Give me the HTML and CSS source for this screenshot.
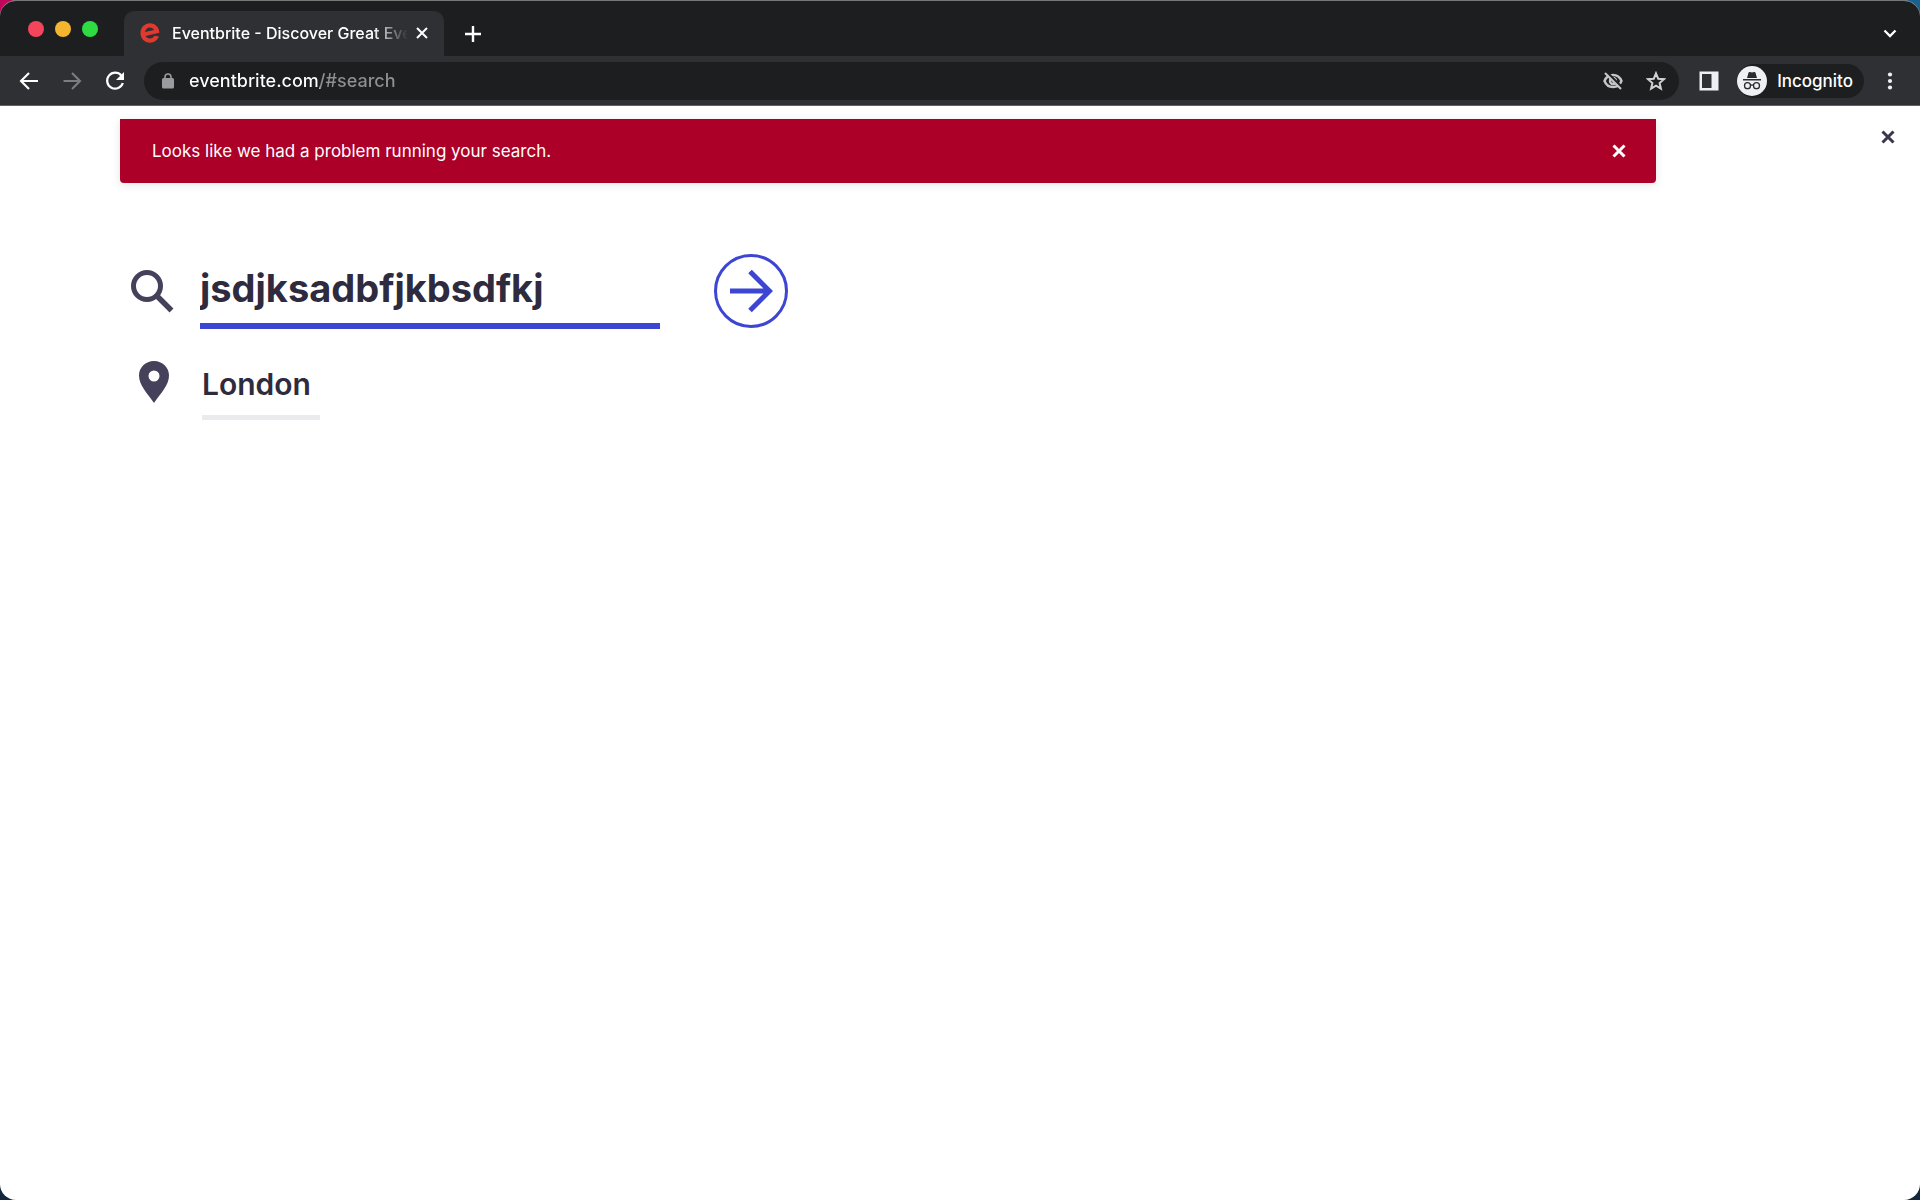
FILE: index.html
```html
<!DOCTYPE html>
<html lang="en">
<head>
    <meta charset="UTF-8">
    <meta name="viewport" content="width=device-width, initial-scale=1.0">
    <title>Eventbrite - Discover Great Events</title>
    <link rel="stylesheet" href="styles.css">
</head>
<body>
    <div class="window">
        <!-- Tab strip -->
        <header class="tab-strip">
            <div class="traffic-lights">
                <button class="light red" aria-label="Close window"></button>
                <button class="light yellow" aria-label="Minimize window"></button>
                <button class="light green" aria-label="Zoom window"></button>
            </div>
            <div class="tab">
                <svg class="favicon" width="20" height="20" viewBox="0 0 20 20">
                    <path d="M10 .3C4.600.3.500 4.500.500 10.100C.5 15.700 4.600 19.700 10 19.700C14 19.700 17.500 17.300 19 13.600L14.500 12.700C13.300 14.500 11.900 15.400 10 15.400C7.900 15.400 6.300 14.500 5.500 12.900L19.400 9.700C19.200 4.200 15.200.3 10 .3zM5 9.100C5.500 6.400 7.300 4.600 9.900 4.600C11.800 4.600 13.300 5.500 14.100 7.100z" fill="#e0392f" fill-rule="evenodd"/>
                </svg>
                <span class="tab-title">Eventbrite - Discover Great Eve</span>
                <button class="icon-button tab-close" aria-label="Close tab">
                    <svg width="12" height="12" viewBox="0 0 12 12"><path d="M1 1l10 10M11 1L1 11" fill="none" stroke="#fff" stroke-width="2"/></svg>
                </button>
            </div>
            <button class="icon-button new-tab" aria-label="New tab">
                <svg width="16" height="16" viewBox="0 0 16 16"><path d="M8 0v16M0 8h16" fill="none" stroke="#fff" stroke-width="2.4"/></svg>
            </button>
            <button class="icon-button tab-search" aria-label="Search tabs">
                <svg width="14" height="10" viewBox="0 0 14 10"><path d="M1.500 1.500l5.500 5.500l5.500-5.500" fill="none" stroke="#fff" stroke-width="2.300"/></svg>
            </button>
        </header>

        <!-- Toolbar -->
        <div class="toolbar">
            <nav class="history">
                <button class="icon-button" aria-label="Back">
                    <svg width="20" height="20" viewBox="0 0 20 20"><path d="M19 10H2.500M10 2L2 10l8 8" fill="none" stroke="#fff" stroke-width="2.100"/></svg>
                </button>
                <button class="icon-button" aria-label="Forward">
                    <svg width="20" height="20" viewBox="0 0 20 20"><path d="M1.500 10H17.500M10 2l8 8l-8 8" fill="none" stroke="#7c7d80" stroke-width="2.100"/></svg>
                </button>
                <button class="icon-button" aria-label="Reload">
                    <svg width="20" height="20" viewBox="0 0 20 20"><path d="M16.300 4.500A8 8 0 1 0 17.800 12" fill="none" stroke="#fff" stroke-width="2.200"/><path d="M19 1v8h-8z" fill="#fff"/></svg>
                </button>
            </nav>
            <div class="address-bar">
                <svg width="12" height="16" viewBox="0 0 12 16"><rect x="0" y="5" width="12" height="10.500" rx="1.500" fill="#9a9b9e"/><path d="M3 6V4a3 3 0 0 1 6 0v2" fill="none" stroke="#9a9b9e" stroke-width="1.600"/></svg>
                <input class="url" type="text" value="eventbrite.com/#search" aria-label="Address">
                <button class="icon-button" aria-label="Third-party cookies blocked">
                    <svg width="20" height="20" viewBox="0 0 20 20">
                        <path d="M1.500 10C3 6.200 6.200 4 10 4s7 2.200 8.500 6C17 13.800 13.800 16 10 16S3 13.800 1.500 10z" fill="none" stroke="#c4c5c8" stroke-width="2.400"/>
                        <circle cx="10" cy="10" r="3" fill="none" stroke="#c4c5c8" stroke-width="2.400"/>
                        <path d="M3.500 1L19 16.500" stroke="#1d1e20" stroke-width="2.500"/>
                        <path d="M2 2l16 16" stroke="#c4c5c8" stroke-width="2.200"/>
                    </svg>
                </button>
                <button class="icon-button" aria-label="Bookmark this tab">
                    <svg width="20" height="20" viewBox="0 0 20 20"><path d="M10 2.300l2.200 5.400l5.800.5l-4.400 3.800l1.300 5.700l-4.900-3l-4.900 3l1.300-5.700L2 8.200l5.800-.5z" fill="none" stroke="#d0d1d4" stroke-width="2"/></svg>
                </button>
            </div>
            <button class="icon-button side-panel" aria-label="Side panel">
                <svg width="20" height="20" viewBox="0 0 20 20"><path d="M.5.5h19v19H.5zM3 3v14h9.500V3z" fill="#eeeff2" fill-rule="evenodd"/></svg>
            </button>
            <button class="incognito">
                <svg width="30" height="30" viewBox="0 0 30 30">
                    <circle cx="15" cy="15" r="15" fill="#eff0f3"/>
                    <path d="M10 12l1.500-5.200q.4-1.100 1.500-.7l2 .5l2-.5q1.100-.4 1.500.7L20 12z" fill="#2a2b2e"/>
                    <path d="M6 13.800h18" stroke="#2a2b2e" stroke-width="1.500"/>
                    <circle cx="10.500" cy="19.700" r="3" fill="none" stroke="#2a2b2e" stroke-width="1.300"/>
                    <circle cx="19.500" cy="19.700" r="3" fill="none" stroke="#2a2b2e" stroke-width="1.300"/>
                    <path d="M13.500 19.500q1.500-1.200 3 0" fill="none" stroke="#2a2b2e" stroke-width="1.300"/>
                </svg>
                Incognito
            </button>
            <button class="icon-button menu" aria-label="Menu">
                <svg width="6" height="18" viewBox="0 0 6 18" fill="#f0f0f2"><circle cx="3" cy="2.500" r="2.100"/><circle cx="3" cy="9" r="2.100"/><circle cx="3" cy="15.500" r="2.100"/></svg>
            </button>
        </div>

        <!-- Page content -->
        <main class="page">
            <div class="notification" role="alert">
                <p>Looks like we had a problem running your search.</p>
                <button class="icon-button" aria-label="Dismiss">
                    <svg width="14" height="14" viewBox="0 0 14 14"><path d="M1.500 1.500l11 11M12.500 1.500l-11 11" stroke="#fff" stroke-width="3"/></svg>
                </button>
            </div>
            <button class="icon-button close-search" aria-label="Close search">
                <svg width="14" height="14" viewBox="0 0 14 14"><path d="M1.500 1.500l11 11M12.500 1.500l-11 11" stroke="#39364f" stroke-width="3"/></svg>
            </button>

            <form class="search-form">
                <div class="search-row">
                    <label class="field-icon" for="query" aria-label="Search events">
                        <svg width="44" height="44" viewBox="0 0 44 44"><circle cx="17" cy="17" r="13.500" fill="none" stroke="#45415a" stroke-width="5"/><path d="M26 26l15.500 15.500" stroke="#45415a" stroke-width="5.500"/></svg>
                    </label>
                    <input class="query" id="query" type="text" value="jsdjksadbfjkbsdfkj" spellcheck="false">
                    <button class="submit" aria-label="Search">
                        <svg width="44" height="44" viewBox="0 0 44 44"><path d="M1 22h38M21 2.500L40.500 22L21 41.500" fill="none" stroke="#3d45d3" stroke-width="5"/></svg>
                    </button>
                </div>
                <div class="search-row location-row">
                    <label class="field-icon" for="location" aria-label="Location">
                        <svg width="32" height="44" viewBox="0 0 32 44"><path d="M16 1C7.500 1 1 7.500 1 15.500C1 25 9 33 16 43C23 33 31 25 31 15.500C31 7.500 24.500 1 16 1zM16 10.500a5.500 5.500 0 1 1 0 11a5.500 5.500 0 1 1 0-11z" fill="#45415a" fill-rule="evenodd"/></svg>
                    </label>
                    <input class="location" id="location" type="text" value="London">
                </div>
            </form>
        </main>
    </div>
</body>
</html>
```
FILE: styles.css
```css
* {
    box-sizing: border-box;
}
body {
    margin: 0;
    font-family: Inter, sans-serif;
    background: linear-gradient(to bottom, transparent 50%, #12263c 50%), linear-gradient(to right, #c0085a, #17628f);
}
button, input {
    font-family: inherit;
    border: none;
    padding: 0;
    background: none;
    outline: none;
}
svg {
    display: block;
    flex-shrink: 0;
}
.window {
    display: flex;
    flex-direction: column;
    min-height: 100vh;
    border-top: 1px solid #77787a;
    border-radius: 16px;
    overflow: hidden;
    background-color: #fff;
}
.icon-button {
    display: flex;
    align-items: center;
    justify-content: center;
    width: 20px;
    height: 20px;
    flex-shrink: 0;
    cursor: pointer;
}

/* tab strip */
.tab-strip {
    display: flex;
    align-items: flex-end;
    height: 55px;
    background-color: #1d1e20;
    padding: 0 20px 0 28px;
}
.traffic-lights {
    display: flex;
    align-self: flex-start;
    gap: 11px;
    width: 96px;
    padding-top: 20px;
}
.light {
    width: 16px;
    height: 16px;
    border-radius: 50%;
}
.red { background-color: #f5455c; }
.yellow { background-color: #f5b52e; }
.green { background-color: #2fdb43; }
.tab {
    display: flex;
    align-items: center;
    width: 320px;
    height: 45px;
    padding: 0 12px 2px 16px;
    border-radius: 10px 10px 0 0;
    background-color: #2f3034;
    color: #fff;
}
.tab-title {
    flex: 1;
    margin: 0 4px 0 12px;
    font-size: 16px;
    font-weight: 500;
    line-height: 24px;
    white-space: nowrap;
    overflow: hidden;
    mask-image: linear-gradient(to right, #000 85%, transparent);
}
.new-tab {
    margin: 0 0 12px 19px;
}
.tab-search {
    margin: 0 0 12px auto;
}

/* toolbar */
.toolbar {
    display: flex;
    align-items: center;
    height: 50px;
    padding: 0 20px 0 19px;
    background-color: #2f3034;
    border-bottom: 1px solid #606164;
}
.history {
    display: flex;
    gap: 23px;
    margin-right: 19px;
}
.address-bar {
    display: flex;
    align-items: center;
    flex: 1;
    gap: 23px;
    height: 38px;
    padding: 0 13px 0 18px;
    border-radius: 19px;
    background-color: #1d1e20;
}
.url {
    flex: 1;
    min-width: 0;
    margin-left: -8px;
    font-size: 18px;
    font-weight: 500;
    line-height: 24px;
    /* the host is white, the rest of the address is grey */
    color: transparent;
    background: linear-gradient(to right, #fff 131px, #8f9093 131px);
    background-clip: text;
}
.side-panel {
    margin: 0 18px 0 20px;
}
.incognito {
    display: flex;
    align-items: center;
    gap: 10px;
    height: 34px;
    padding-right: 11px;
    border-radius: 17px;
    background-color: #1d1e20;
    color: #fff;
    font-size: 17px;
    font-weight: 500;
}
.menu {
    margin-left: 16px;
}

/* page */
.page {
    position: relative;
    flex: 1;
    padding: 13px 120px;
}
.notification {
    display: flex;
    align-items: center;
    justify-content: space-between;
    width: 1536px;
    max-width: 100%;
    height: 64px;
    padding: 0 27px 0 32px;
    border-radius: 0 0 4px 4px;
    background-color: #ac0028;
    box-shadow: 0 2px 8px rgba(40, 44, 53, 0.12);
    color: #fff;
}
.notification p {
    margin: 0;
    font-size: 17px;
    line-height: 24px;
}
.close-search {
    position: absolute;
    top: 21px;
    right: 22px;
}
.search-form {
    padding-top: 70px;
}
.search-row {
    display: flex;
    align-items: center;
}
.field-icon {
    display: flex;
    justify-content: center;
    width: 64px;
    margin-right: 16px;
}
.query {
    width: 460px;
    height: 76px;
    border-bottom: 6px solid #3d45d3;
    color: #2e2b3f;
    font-size: 38px;
    font-weight: 700;
}
.submit {
    display: flex;
    align-items: center;
    justify-content: center;
    width: 74px;
    height: 74px;
    margin-left: 54px;
    border: 3px solid #3d45d3;
    border-radius: 50%;
    cursor: pointer;
}
.location-row {
    align-items: flex-start;
    padding: 31px 0 0 2px;
}
.location {
    width: 118px;
    height: 60px;
    padding-bottom: 8px;
    border-bottom: 5px solid #ebebee;
    color: #2e2b3f;
    font-size: 30px;
    font-weight: 600;
}
```
